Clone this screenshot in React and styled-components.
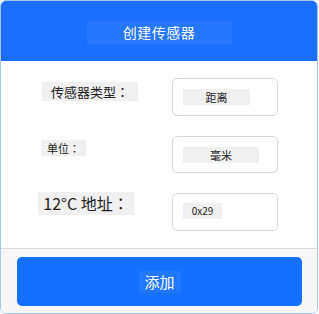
import React from "react";
import styled, { createGlobalStyle } from "styled-components";

const Global = createGlobalStyle`
  html, body { margin: 0; padding: 0; background: #ffffff; }
  body { font-family: "Noto Sans CJK SC", "Noto Sans", sans-serif; }
`;

const Card = styled.div`
  box-sizing: border-box;
  width: 318px;
  height: 314px;
  border: 1px solid #a9c6f2;
  border-radius: 6px;
  overflow: hidden;
  display: flex;
  flex-direction: column;
  background: #fff;
`;

const Header = styled.div`
  height: 60px;
  background: #1a6ffd;
  display: flex;
  align-items: center;
  justify-content: center;
  flex-shrink: 0;
`;

const Title = styled.div`
  background: rgba(255, 255, 255, 0.06);
  color: #fff;
  font-size: 14px;
  width: 145px;
  height: 23px;
  line-height: 23px;
  text-align: center;
  margin-top: 2px;
  letter-spacing: 0.5px;
`;

const Body = styled.div`
  flex: 1;
  display: flex;
  flex-direction: column;
  gap: 20px;
  padding: 17px 0 0 0;
`;

const Row = styled.div`
  display: flex;
  align-items: flex-start;
  height: ${(p) => p.$h}px;
`;

const LabelCell = styled.div`
  width: 171px;
  display: flex;
`;

const Label = styled.div`
  background: #f0f0f0;
  color: #222;
  font-size: ${(p) => p.$size}px;
  margin-left: ${(p) => p.$left}px;
  margin-top: ${(p) => p.$top}px;
  width: ${(p) => p.$w}px;
  height: ${(p) => p.$h}px;
  line-height: ${(p) => p.$h}px;
  text-align: center;
  white-space: nowrap;
`;

const Colon = styled.span`
  font-family: "Noto Sans CJK JP", "Noto Sans CJK SC", sans-serif;
`;

const InputBox = styled.div`
  box-sizing: border-box;
  width: 106px;
  height: ${(p) => p.$h}px;
  border: 1px solid #d6d6d6;
  border-radius: 5px;
  padding-left: 10px;
  padding-top: ${(p) => p.$pt}px;
`;

const Value = styled.div`
  background: #f0f0f0;
  color: #222;
  font-size: ${(p) => p.$size}px;
  width: ${(p) => p.$w}px;
  height: 16px;
  line-height: 16px;
  text-align: center;
`;

const Footer = styled.div`
  flex-shrink: 0;
  height: 65px;
  box-sizing: border-box;
  background: #f7f7f7;
  border-top: 1px solid #dcdcdc;
  padding: 8px 15px 7px 16px;
  display: flex;
`;

const Button = styled.button`
  flex: 1;
  border: none;
  border-radius: 5px;
  background: #1470fe;
  display: flex;
  align-items: center;
  justify-content: center;
  padding: 0;
  font-family: inherit;
`;

const ButtonText = styled.span`
  background: rgba(255, 255, 255, 0.06);
  color: #fff;
  font-size: 15px;
  width: 42px;
  height: 22px;
  line-height: 22px;
  text-align: center;
`;

export default function App() {
  return (
    <>
      <Global />
      <Card>
        <Header>
          <Title>创建传感器</Title>
        </Header>
        <Body>
          <Row $h={38}>
            <LabelCell>
              <Label $size={13} $left={41} $top={4} $w={96} $h={19}>
                传感器类型<Colon>：</Colon>
              </Label>
            </LabelCell>
            <InputBox $h={38} $pt={10}>
              <Value $size={11} $w={67}>距离</Value>
            </InputBox>
          </Row>
          <Row $h={37}>
            <LabelCell>
              <Label $size={11} $left={40} $top={4} $w={45} $h={16}>
                单位<Colon>：</Colon>
              </Label>
            </LabelCell>
            <InputBox $h={37} $pt={10}>
              <Value $size={11} $w={76}>毫米</Value>
            </InputBox>
          </Row>
          <Row $h={38}>
            <LabelCell>
              <Label $size={16} $left={37} $top={-1} $w={96} $h={23}>
                12°C 地址<Colon>：</Colon>
              </Label>
            </LabelCell>
            <InputBox $h={38} $pt={9}>
              <Value $size={10} $w={39}>0x29</Value>
            </InputBox>
          </Row>
        </Body>
        <Footer>
          <Button>
            <ButtonText>添加</ButtonText>
          </Button>
        </Footer>
      </Card>
    </>
  );
}
